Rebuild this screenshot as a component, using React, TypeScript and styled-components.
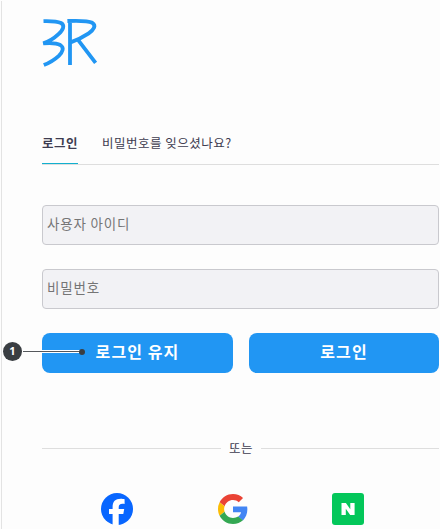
import React from 'react';
import styled, { createGlobalStyle } from 'styled-components';

const GlobalStyle = createGlobalStyle`
  * { box-sizing: border-box; }
  body {
    margin: 0;
    background: #fdfdfd;
    color: #3e3c50;
    font-family: "Noto Sans CJK KR", "Noto Sans", sans-serif;
    overflow: hidden;
  }
  button, input { font-family: inherit; }
`;

const Page = styled.main`
  width: 439px;
  height: 528px;
  margin: 1px 0 0 1px;
  padding: 17px 1px 0 40px;
  border-left: 1px solid #e3e3e3;
  display: flex;
  flex-direction: column;
`;

const Logo = styled.svg`
  display: block;
  width: 56px;
  height: 49px;
`;

const Tabs = styled.nav`
  display: flex;
  gap: 24px;
  height: 33px;
  margin-top: 65px;
  border-bottom: 1px solid #dedede;
`;

const Tab = styled.a<{ $active?: boolean }>`
  height: 32px;
  font-size: 12.5px;
  line-height: 22px;
  letter-spacing: 0.5px;
  white-space: nowrap;
  font-weight: ${(p) => (p.$active ? 700 : 400)};
  border-bottom: 1px solid ${(p) => (p.$active ? '#12b0cf' : 'transparent')};
`;

const Form = styled.form`
  display: flex;
  flex-direction: column;
  gap: 24px;
  margin-top: 40px;
`;

const Field = styled.input`
  width: 100%;
  height: 40px;
  padding: 0 4px 4px;
  border: 1px solid #c9c9ce;
  border-radius: 4px;
  background: #f2f2f5;
  font-size: 13.5px;
  letter-spacing: 0.8px;
  outline: none;
  &::placeholder { color: #757575; opacity: 1; }
`;

const Actions = styled.div`
  display: grid;
  grid-template-columns: 191px 190px;
  gap: 16px;
`;

const Button = styled.button`
  position: relative;
  height: 40px;
  padding: 0 0 4px;
  border: 0;
  border-radius: 8px;
  background: #2196f3;
  color: #fff;
  font-size: 16px;
  font-weight: 700;
  letter-spacing: 1.1px;
`;

const Callout = styled.span`
  position: absolute;
  left: -39px;
  top: 9px;
  display: flex;
  align-items: center;
  width: 82px;
  height: 19px;
`;

const CalloutNumber = styled.span`
  width: 19px;
  height: 19px;
  border-radius: 50%;
  background: #3a3e42;
  color: #fff;
  font: 700 11px/17px "Noto Sans", sans-serif;
  letter-spacing: 0;
  text-align: center;
`;

const CalloutLine = styled.span`
  width: 58px;
  height: 3px;
  margin-left: 1px;
  border: solid #fff;
  border-width: 1px 0;
  background: #55585c;
`;

const CalloutDot = styled.span`
  width: 6px;
  height: 6px;
  margin-left: -2px;
  border-radius: 50%;
  background: #3a3e42;
`;

const Divider = styled.div`
  display: flex;
  align-items: center;
  gap: 8px;
  height: 20px;
  margin-top: 65px;
  font-size: 12.5px;
  line-height: 20px;
  letter-spacing: 0.5px;
  &::before, &::after {
    content: "";
    flex: 0 0 179px;
    height: 1px;
    background: #dedede;
  }
  &::after { flex: 1; }
`;

const Providers = styled.div`
  display: grid;
  grid-template-columns: 32px 30px 32px;
  column-gap: 84.5px;
  align-items: center;
  height: 32px;
  margin: 35px 0 0 59px;
`;

const ProviderIcon = styled.svg`
  display: block;
  width: 100%;
  overflow: visible;
`;

export default function App() {
  return (
    <>
      <GlobalStyle />
      <Page>
        <Logo viewBox="0 0 56 49" fill="none" stroke="#2196f3" strokeWidth="3.8" aria-label="3R">
          <path d="M1.5 3.1C9.5 2.9 15.5 3.3 19 5C23 7.3 21.5 11.4 16.5 16.2C13 19.5 7.5 23.4 1.2 25.4C8.5 24.8 14.5 24.9 18.3 27C22.5 29.6 20.8 33.9 16.8 37.8C12.8 41.5 7.5 44.7 1.8 47.1" />
          <path d="M28 47V3M25.4 3C36 2.6 46.5 2.8 50.3 4.8C54.6 7.4 51.7 12 46.7 15.4C41.2 19.1 35 22.1 28 24.6M36.2 22.1L53.6 44.8" />
        </Logo>
        <Tabs>
          <Tab $active>로그인</Tab>
          <Tab>비밀번호를 잊으셨나요?</Tab>
        </Tabs>
        <Form>
          <Field placeholder="사용자 아이디" />
          <Field type="password" placeholder="비밀번호" />
          <Actions>
            <Button type="button">
              로그인 유지
              <Callout>
                <CalloutNumber>1</CalloutNumber>
                <CalloutLine />
                <CalloutDot />
              </Callout>
            </Button>
            <Button type="button">로그인</Button>
          </Actions>
        </Form>
        <Divider>또는</Divider>
        <Providers>
          <ProviderIcon viewBox="0 0 32 32" aria-label="Facebook">
            <circle cx="16" cy="16" r="16" fill="#0866ff" />
            <path fill="#fff" d="M11.6 32V20.9H8V16h3.6v-1.7c0-5.8 2.6-8.5 8.3-8.5 1.1 0 2.9.2 3.7.4v4.7c-.4 0-1.1-.1-2-.1-2.8 0-3.9 1.1-3.9 3.8V16h5.5l-.9 4.9h-4.6V31.9a16 16 0 0 1-6.1.1z" />
          </ProviderIcon>
          <ProviderIcon viewBox="0 0 48 48" aria-label="Google">
            <path fill="#ea4335" d="M24 9.5c3.54 0 6.71 1.22 9.21 3.6l6.85-6.85C35.9 2.38 30.47 0 24 0 14.62 0 6.51 5.38 2.56 13.22l7.98 6.19C12.43 13.72 17.74 9.5 24 9.5z" />
            <path fill="#4285f4" d="M46.98 24.55c0-1.57-.15-3.09-.38-4.55H24v9.02h12.94c-.58 2.96-2.26 5.48-4.78 7.18l7.73 6c4.51-4.18 7.09-10.36 7.09-17.65z" />
            <path fill="#fbbc05" d="M10.53 28.59A14.5 14.5 0 0 1 9.77 24c0-1.6.27-3.14.76-4.59l-7.98-6.19A24 24 0 0 0 0 24c0 3.88.92 7.54 2.56 10.78l7.97-6.19z" />
            <path fill="#34a853" d="M24 48c6.48 0 11.93-2.13 15.89-5.81l-7.73-6c-2.15 1.45-4.92 2.3-8.16 2.3-6.26 0-11.57-4.22-13.47-9.91l-7.98 6.19C6.51 42.62 14.62 48 24 48z" />
          </ProviderIcon>
          <ProviderIcon viewBox="0 0 32 32" aria-label="Naver">
            <rect width="32" height="32" rx="3" fill="#03c75a" />
            <path fill="#fff" d="M9.5 10h4.4l4.4 6.3V10h4.3v12h-4.4l-4.4-6.3V22H9.5z" />
          </ProviderIcon>
        </Providers>
      </Page>
    </>
  );
}
